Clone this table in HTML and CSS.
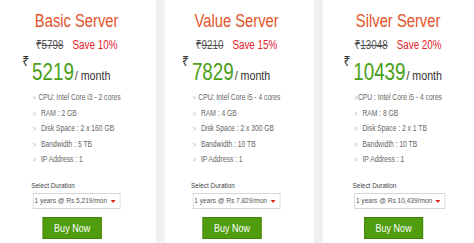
FILE: index.html
```html
<!DOCTYPE html>
<html lang="en">
<head>
<meta charset="utf-8">
<title>Server Plans</title>
<link rel="stylesheet" href="styles.css">
</head>
<body>
<div class="page">
<div class="plans">
  <section class="card card-basic">
    <h2 class="title">Basic Server</h2>
    <div class="offer"><span class="old"><span class="rs">₹</span>5798</span><span class="save">Save 10%</span></div>
    <div class="body">
      <div class="price"><span class="cur">₹</span><span class="amt-wrap"><span class="amt">5219</span><span class="per">/ month</span></span></div>
      <ul class="specs">
        <li>CPU: Intel Core i3 - 2 cores</li>
        <li>RAM : 2 GB</li>
        <li>Disk Space : 2 x 160 GB</li>
        <li>Bandwidth : 5 TB</li>
        <li>IP Address : 1</li>
      </ul>
      <div class="dur-label">Select Duration</div>
      <div class="select"><span class="sel-text">1 years @ Rs 5,219/mon</span><span class="caret"></span></div>
      <button class="buy">Buy Now</button>
    </div>
  </section>
  <section class="card card-value">
    <h2 class="title">Value Server</h2>
    <div class="offer"><span class="old"><span class="rs">₹</span>9210</span><span class="save">Save 15%</span></div>
    <div class="body">
      <div class="price"><span class="cur">₹</span><span class="amt-wrap"><span class="amt">7829</span><span class="per">/ month</span></span></div>
      <ul class="specs">
        <li>CPU: Intel Core i5 - 4 cores</li>
        <li>RAM : 4 GB</li>
        <li>Disk Space : 2 x 300 GB</li>
        <li>Bandwidth : 10 TB</li>
        <li>IP Address : 1</li>
      </ul>
      <div class="dur-label">Select Duration</div>
      <div class="select"><span class="sel-text">1 years @ Rs 7,829/mon</span><span class="caret"></span></div>
      <button class="buy">Buy Now</button>
    </div>
  </section>
  <section class="card card-silver">
    <h2 class="title">Silver Server</h2>
    <div class="offer"><span class="old"><span class="rs">₹</span>13048</span><span class="save">Save 20%</span></div>
    <div class="body">
      <div class="price"><span class="cur">₹</span><span class="amt-wrap"><span class="amt">10439</span><span class="per">/ month</span></span></div>
      <ul class="specs">
        <li>CPU : Intel Core i5 - 4 cores</li>
        <li>RAM : 8 GB</li>
        <li>Disk Space : 2 x 1 TB</li>
        <li>Bandwidth : 10 TB</li>
        <li>IP Address : 1</li>
      </ul>
      <div class="dur-label">Select Duration</div>
      <div class="select select-wide"><span class="sel-text">1 years @ Rs 10,439/mon</span><span class="caret"></span></div>
      <button class="buy">Buy Now</button>
    </div>
  </section>
</div>
</div>
</body>
</html>
```

FILE: styles.css
```css
* { box-sizing: border-box; }
html, body {
  margin: 0;
  padding: 0;
  background: #f0f0f0;
  width: 474px;
  height: 243px;
  overflow: hidden;
  font-family: "Liberation Sans", Arial, sans-serif;
}
.page {
  width: 474px;
  height: 243px;
  overflow: hidden;
}
/* the design uses a narrow face: the whole sheet is drawn condensed */
.plans {
  display: grid;
  grid-template-columns: 190px 182px 184px;
  column-gap: 11px;
  width: 578px;
  height: 243px;
  transform: scaleX(0.82);
  transform-origin: 0 0;
}
.card {
  background: #fff;
  display: flex;
  flex-direction: column;
  align-items: center;
  padding-top: 9px;
}
.card-basic { padding-right: 3px; }
.card-value { padding-right: 7px; }
.card-silver { padding-right: 1px; }
.title {
  margin: 0;
  font-size: 18px;
  line-height: 24px;
  font-weight: normal;
  color: #e5532a;
  white-space: nowrap;
}
.offer {
  margin-top: 5px;
  display: flex;
  gap: 11px;
  font-size: 12px;
  line-height: 14px;
  white-space: nowrap;
}
.old {
  color: #555;
  text-decoration: line-through;
}
.rs, .cur {
  font-family: "Noto Sans", "DejaVu Sans", sans-serif;
}
.save { color: #e8202a; }
.body {
  width: 107px;
  display: flex;
  flex-direction: column;
  align-items: stretch;
}
.price {
  display: flex;
  align-items: flex-start;
  margin-top: 0;
  margin-left: -13px;
  white-space: nowrap;
}
.cur {
  font-size: 15px;
  line-height: 16px;
  color: #333;
  width: 12px;
}
.amt-wrap {
  margin-top: 8px;
  line-height: 24px;
}
.amt {
  font-size: 23px;
  color: #4b9e17;
}
.per {
  font-size: 13px;
  color: #333;
  margin-left: 1px;
}
.specs {
  list-style: none;
  margin: 2px 0 0 0;
  padding: 0;
}
.specs li {
  font-size: 8.2px;
  line-height: 15.6px;
  color: #666;
  white-space: nowrap;
  display: flex;
}
.specs li::before {
  content: ">";
  color: #aaa;
  font-size: 7px;
  width: 10px;
}
.dur-label {
  margin-top: 12px;
  margin-left: -2px;
  font-size: 7.8px;
  line-height: 12px;
  color: #444;
  white-space: nowrap;
}
.select {
  position: relative;
  margin-top: 1px;
  height: 16px;
  border: 1px solid #d6d6d6;
  background: #fff;
  overflow: hidden;
  padding-left: 1px;
}
.select-wide { width: 111px; }
.sel-text {
  display: block;
  font-size: 8px;
  line-height: 14px;
  color: #555;
  white-space: nowrap;
}
.caret {
  position: absolute;
  right: 5px;
  top: 6px;
  width: 0;
  height: 0;
  border-left: 3px solid transparent;
  border-right: 3px solid transparent;
  border-top: 3px solid #d9261c;
}
.buy {
  margin-top: 8px;
  margin-left: 12px;
  width: 72px;
  height: 22px;
  padding: 0;
  border: 1px solid #3f820a;
  background: #4f9c0e;
  color: #fff;
  font-family: inherit;
  font-size: 11px;
  line-height: 20px;
  cursor: pointer;
}
```
